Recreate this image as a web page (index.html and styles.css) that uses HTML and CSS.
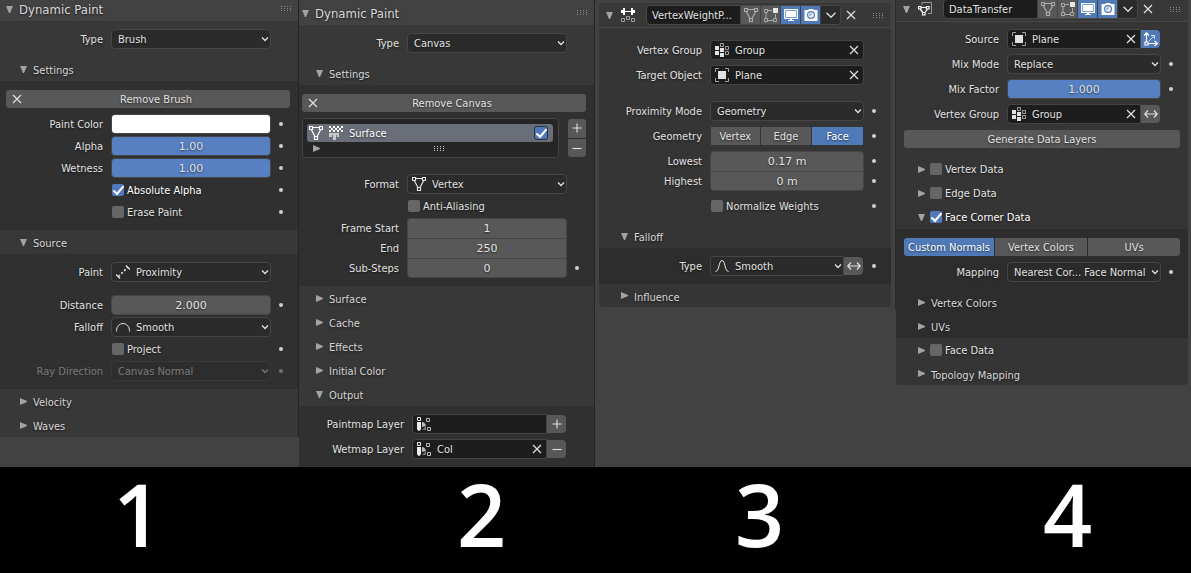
FILE: index.html
```
<!DOCTYPE html>
<html lang="en">
<head>
<meta charset="utf-8">
<title>Modifier panels</title>
<link rel="stylesheet" href="styles.css">
</head>
<body>
<svg class="sprite" aria-hidden="true">
  <symbol id="down" viewBox="0 0 7 7"><path d="M0 0H7L4 7H3Z" fill="currentColor"/></symbol>
  <symbol id="right" viewBox="0 0 7 7"><path d="M0 0V7L7 4V3Z" fill="currentColor"/></symbol>
  <symbol id="chev" viewBox="0 0 8 8"><path d="M1 2.5L4 5.5L7 2.5" fill="none" stroke="currentColor" stroke-width="1.3" vector-effect="non-scaling-stroke"/></symbol>
  <symbol id="x" viewBox="0 0 10 10"><path d="M1 1L9 9M9 1L1 9" fill="none" stroke="currentColor" stroke-width="1.2"/></symbol>
  <symbol id="plus" viewBox="0 0 10 10"><path d="M.5 5H9.5M5 .5V9.5" fill="none" stroke="currentColor" stroke-width="1.1"/></symbol>
  <symbol id="minus" viewBox="0 0 10 10"><path d="M.5 5.5H9.5" fill="none" stroke="currentColor" stroke-width="1.1"/></symbol>
  <symbol id="grip" viewBox="0 0 11 5"><path d="M0 .5H11M0 2.5H11M0 4.5H11" fill="none" stroke="currentColor" stroke-dasharray="1 2"/></symbol>
  <symbol id="arrows" viewBox="0 0 14 14"><path d="M1 7H13M4 3.5L.8 7L4 10.5M10 3.5L13.2 7L10 10.5" fill="none" stroke="currentColor" stroke-width="1.2"/></symbol>
  <symbol id="mesh" viewBox="0 0 14 14"><path d="M.5 .5H3.5V3.5H.5ZM10.5 .5H13.5V3.5H10.5ZM5.5 10.5H8.5V13.5H5.5ZM4 1.5H10M2.5 4L6 10.5M11.5 4L8 10.5" fill="none" stroke="currentColor" stroke-width="1.2"/></symbol>
  <symbol id="edit" viewBox="0 0 14 14"><path d="M.5 1.5H3.5V4.5H.5ZM.5 10.5H3.5V13.5H.5ZM9.5 10.5H12.5V13.5H9.5ZM4 2.5H8M2 5V10M4 12.5H9M11.500 6V10" fill="none" stroke="currentColor"/><rect x="9" width="5" height="5" fill="#e6e6e6"/></symbol>
  <symbol id="screen" viewBox="0 0 14 14"><path d="M.7 1.700H13.300V10.300H.7Z" fill="none" stroke="currentColor" stroke-width="1.3"/><path d="M2 3H12V9H2ZM6 10H8V12H10V13H4V12H6Z" fill="currentColor"/></symbol>
  <symbol id="camera" viewBox="0 0 14 14"><path fill-rule="evenodd" d="M.5 2H4L5 1H9L10 2H13.500V13H.5ZM7 3A4 4 0 1 0 7 11A4 4 0 1 0 7 3Z" fill="currentColor"/><circle cx="7" cy="7" r="2.8" fill="currentColor" opacity=".9"/><path d="M6 8A1.500 1.500 0 0 1 8 6" fill="none" stroke="#537cbf"/></symbol>
  <symbol id="canvas" viewBox="0 0 14 14"><path d="M0 0H2V2H0ZM4 0H6V2H4ZM8 0H10V2H8ZM12 0H14V2H12ZM2 2H4V4H2ZM6 2H8V4H6ZM10 2H12V4H10ZM0 4H2V6H0ZM4 4H6V6H4ZM8 4H10V6H8ZM12 4H14V6H12Z" fill="#fff"/><path d="M0 7H10V11H8V9H7V14H4V9H3V11H0Z" fill="#c9c9c9"/></symbol>
  <symbol id="distance" viewBox="0 0 14 14"><path d="M0 9.500L4 13.500M10 .5L14 4.500" fill="none" stroke="currentColor" stroke-width="1.3"/><path d="M2.500 11.500L12 2" fill="none" stroke="currentColor" stroke-width="1.7" stroke-dasharray="2 2"/></symbol>
  <symbol id="dome" viewBox="0 0 14 14"><path d="M.5 11.500V10.500A6.500 7 0 0 1 13.500 10.500V11.500" fill="none" stroke="currentColor"/></symbol>
  <symbol id="bell" viewBox="0 0 14 14"><path d="M.5 12.500C4.500 12.500 3.500 1.500 7 1.500S9.500 12.500 13.500 12.500" fill="none" stroke="currentColor"/></symbol>
  <symbol id="vgroup" viewBox="0 0 14 14"><path d="M0 3H4V7H0ZM0 8H4V12H0ZM5 5H9V9H5ZM5 10H9V14H5Z" fill="currentColor"/><path d="M5.500 .5H8.500V3.500H5.500ZM10.500 3.500H13.500V6.500H10.500ZM10.500 8.500H13.500V11.500H10.500Z" fill="none" stroke="#a0a0a0"/></symbol>
  <symbol id="object" viewBox="0 0 14 14"><rect x="3" y="3" width="8" height="8" fill="currentColor"/><path d="M.5 4V.5H4M10 .5H13.500V4M13.500 10V13.500H10M4 13.500H.5V10" fill="none" stroke="#a0a0a0"/></symbol>
  <symbol id="vcol" viewBox="0 0 14 14"><path d="M.5 .5H3.500V3.500H.5Z" fill="none" stroke="#eee"/><path d="M0 5H4V12Q2 16 0 12Z" fill="#eee"/><path d="M5 5Q8 5 9 9L5 10Z" fill="#bbb"/><path d="M5 13L9 9V13Z" fill="#777"/><path d="M9.500 1.500H12.500V4.500H9.500ZM10.500 10.500H13.500V13.500H10.500Z" fill="none" stroke="#bbb"/></symbol>
  <symbol id="weight" viewBox="0 0 14 14"><path d="M0 2H2V0H4V3H10V0H12V2H14V5H12V7H10V4H4V7H2V5H0Z" fill="#fff"/><path d="M.5 10.500H3.500V13.500H.5ZM5.500 8.500H8.500V11.500H5.500ZM10.500 10.500H13.500V13.500H10.500Z" fill="none" stroke="#a0a0a0"/></symbol>
  <symbol id="transfer" viewBox="0 0 14 14"><path d="M4 3V.5H13.500V11.500H10" fill="none" stroke="#999"/><path d="M.5 4.500H3V7H.5ZM8.500 4.500H11V7H8.500ZM4.500 10.500H7V13H4.500ZM3 5.500H8.500M2 7L5 10.500M9.500 7L7 10.500" fill="none" stroke="#fff" stroke-width="1.200"/></symbol>
  <symbol id="axis" viewBox="0 0 14 14"><path d="M2.500 9.500V1M0 3.500L2.500 .8L5 3.500M4.500 11.500H13M10.500 9L13.300 11.500L10.500 14M1 10H4V13H1Z" fill="none" stroke="#fff" stroke-width="1.200"/><path d="M5 9L10.500 3.500M7 3.500H10.500V7" fill="none" stroke="#cfdcf2"/></symbol>
</svg>

<main class="board">
  <section class="column brush" aria-label="Dynamic Paint brush">
    <header class="title"><button class="fold"><svg class="tri"><use href="#down"/></svg>Dynamic Paint</button><svg class="grip"><use href="#grip"/></svg></header>
    <div class="body">
      <div class="row"><label for="t1">Type</label><span class="drop"><select id="t1"><option>Brush</option></select><svg class="chev"><use href="#chev"/></svg></span></div>
    </div>
    <button class="fold sub"><svg class="tri"><use href="#down"/></svg>Settings</button>
    <div class="body inner">
      <button class="wide"><svg class="cross"><use href="#x"/></svg><span>Remove Brush</span></button>
      <div class="rows tight">
        <div class="row"><label for="pc">Paint Color</label><input id="pc" class="swatch" type="color" value="#ffffff"><i class="dot"></i></div>
        <div class="row"><label for="al">Alpha</label><input id="al" class="num slide" value="1.00"><i class="dot"></i></div>
        <div class="row"><label for="we">Wetness</label><input id="we" class="num slide" value="1.00"><i class="dot"></i></div>
        <div class="row"><label class="check on"><input type="checkbox" checked><span>Absolute Alpha</span></label><i class="dot"></i></div>
        <div class="row"><label class="check"><input type="checkbox"><span>Erase Paint</span></label><i class="dot"></i></div>
      </div>
    </div>
    <button class="fold sub"><svg class="tri"><use href="#down"/></svg>Source</button>
    <div class="body inner">
      <div class="row"><label for="pa">Paint</label><span class="drop pic"><select id="pa"><option>Proximity</option></select><svg class="icon"><use href="#distance"/></svg><svg class="chev"><use href="#chev"/></svg></span></div>
      <div class="rows tight spaced">
        <div class="row"><label for="di">Distance</label><input id="di" class="num" value="2.000"><i class="dot"></i></div>
        <div class="row"><label for="fa">Falloff</label><span class="drop pic"><select id="fa"><option>Smooth</option></select><svg class="icon"><use href="#dome"/></svg><svg class="chev"><use href="#chev"/></svg></span></div>
        <div class="row"><label class="check"><input type="checkbox"><span>Project</span></label><i class="dot"></i></div>
        <div class="row off"><label for="ra">Ray Direction</label><span class="drop"><select id="ra" disabled><option>Canvas Normal</option></select><svg class="chev"><use href="#chev"/></svg></span><i class="dot"></i></div>
      </div>
    </div>
    <button class="fold sub"><svg class="tri"><use href="#right"/></svg>Velocity</button>
    <button class="fold sub"><svg class="tri"><use href="#right"/></svg>Waves</button>
  </section>

  <section class="column surface" aria-label="Dynamic Paint canvas">
    <header class="title low"><button class="fold"><svg class="tri"><use href="#down"/></svg>Dynamic Paint</button><svg class="grip"><use href="#grip"/></svg></header>
    <div class="body">
      <div class="row"><label for="t2">Type</label><span class="drop"><select id="t2"><option>Canvas</option></select><svg class="chev"><use href="#chev"/></svg></span></div>
    </div>
    <button class="fold sub"><svg class="tri"><use href="#down"/></svg>Settings</button>
    <div class="body inner">
      <button class="wide"><svg class="cross"><use href="#x"/></svg><span>Remove Canvas</span></button>
      <div class="listing">
        <div class="list">
          <div class="item"><svg class="icon"><use href="#mesh"/></svg><svg class="icon"><use href="#canvas"/></svg><span>Surface</span><input type="checkbox" checked aria-label="Surface enabled"></div>
          <div class="listfoot"><svg class="tri"><use href="#right"/></svg><svg class="grip"><use href="#grip"/></svg></div>
        </div>
        <div class="pair"><button aria-label="Add"><svg><use href="#plus"/></svg></button><button aria-label="Remove"><svg><use href="#minus"/></svg></button></div>
      </div>
      <div class="rows tight">
        <div class="row"><label for="fo">Format</label><span class="drop pic"><select id="fo"><option>Vertex</option></select><svg class="icon"><use href="#mesh"/></svg><svg class="chev"><use href="#chev"/></svg></span></div>
        <div class="row"><label class="check"><input type="checkbox"><span>Anti-Aliasing</span></label></div>
        <div class="stack">
          <div class="row"><label for="fs">Frame Start</label><input id="fs" class="num" value="1"></div>
          <div class="row"><label for="en">End</label><input id="en" class="num" value="250"></div>
          <div class="row"><label for="ss">Sub-Steps</label><input id="ss" class="num" value="0"><i class="dot"></i></div>
        </div>
      </div>
    </div>
    <button class="fold sub"><svg class="tri"><use href="#right"/></svg>Surface</button>
    <button class="fold sub"><svg class="tri"><use href="#right"/></svg>Cache</button>
    <button class="fold sub"><svg class="tri"><use href="#right"/></svg>Effects</button>
    <button class="fold sub"><svg class="tri"><use href="#right"/></svg>Initial Color</button>
    <button class="fold sub"><svg class="tri"><use href="#down"/></svg>Output</button>
    <div class="body inner rows layers">
      <div class="row"><label for="pl">Paintmap Layer</label><span class="joined"><span class="search"><svg class="icon"><use href="#vcol"/></svg><input id="pl" value=""></span><button class="side" aria-label="Add layer"><svg><use href="#plus"/></svg></button></span></div>
      <div class="row"><label for="wl">Wetmap Layer</label><span class="joined"><span class="search"><svg class="icon"><use href="#vcol"/></svg><input id="wl" value="Col"><button aria-label="Clear"><svg><use href="#x"/></svg></button></span><button class="side" aria-label="Remove layer"><svg><use href="#minus"/></svg></button></span></div>
    </div>
  </section>

  <section class="column framed" aria-label="Vertex Weight Proximity">
    <div class="card">
      <header class="modhead">
        <svg class="tri"><use href="#down"/></svg><svg class="icon"><use href="#weight"/></svg>
        <div class="bar"><input value="VertexWeightP..." aria-label="Modifier name"><button aria-label="On cage"><svg><use href="#mesh"/></svg></button><button aria-label="Edit mode"><svg><use href="#edit"/></svg></button><button class="lit" aria-label="Viewport"><svg><use href="#screen"/></svg></button><button class="lit" aria-label="Render"><svg><use href="#camera"/></svg></button><button class="more" aria-label="More"><svg><use href="#chev"/></svg></button></div>
        <button class="close" aria-label="Close"><svg><use href="#x"/></svg></button><svg class="grip"><use href="#grip"/></svg>
      </header>
      <div class="body top">
        <div class="rows">
          <div class="row"><label for="vg">Vertex Group</label><span class="search"><svg class="icon"><use href="#vgroup"/></svg><input id="vg" value="Group"><button aria-label="Clear"><svg><use href="#x"/></svg></button></span></div>
          <div class="row"><label for="to">Target Object</label><span class="search"><svg class="icon"><use href="#object"/></svg><input id="to" value="Plane"><button aria-label="Clear"><svg><use href="#x"/></svg></button></span></div>
        </div>
        <div class="rows apart">
          <div class="row"><label for="pm">Proximity Mode</label><span class="drop"><select id="pm"><option>Geometry</option></select><svg class="chev"><use href="#chev"/></svg></span><i class="dot"></i></div>
          <div class="row"><span class="name">Geometry</span><span class="tabs"><button>Vertex</button><button>Edge</button><button class="lit">Face</button></span><i class="dot"></i></div>
          <div class="stack">
            <div class="row"><label for="lo">Lowest</label><input id="lo" class="num" value="0.17 m"><i class="dot"></i></div>
            <div class="row"><label for="hi">Highest</label><input id="hi" class="num" value="0 m"><i class="dot"></i></div>
          </div>
          <div class="row"><label class="check"><input type="checkbox"><span>Normalize Weights</span></label><i class="dot"></i></div>
        </div>
      </div>
      <button class="fold sub"><svg class="tri"><use href="#down"/></svg>Falloff</button>
      <div class="body inner">
        <div class="row"><label for="ft">Type</label><span class="joined"><span class="drop pic"><select id="ft"><option>Smooth</option></select><svg class="icon"><use href="#bell"/></svg><svg class="chev"><use href="#chev"/></svg></span><button class="side" aria-label="Invert"><svg class="big"><use href="#arrows"/></svg></button></span><i class="dot"></i></div>
      </div>
      <button class="fold sub"><svg class="tri"><use href="#right"/></svg>Influence</button>
    </div>
  </section>

  <section class="column transfer" aria-label="Data Transfer">
    <div class="card">
      <header class="modhead">
        <svg class="tri"><use href="#down"/></svg><svg class="icon"><use href="#transfer"/></svg>
        <div class="bar"><input value="DataTransfer" aria-label="Modifier name"><button aria-label="On cage"><svg><use href="#mesh"/></svg></button><button aria-label="Edit mode"><svg><use href="#edit"/></svg></button><button class="lit" aria-label="Viewport"><svg><use href="#screen"/></svg></button><button class="lit" aria-label="Render"><svg><use href="#camera"/></svg></button><button class="more" aria-label="More"><svg><use href="#chev"/></svg></button></div>
        <button class="close" aria-label="Close"><svg><use href="#x"/></svg></button><svg class="grip"><use href="#grip"/></svg>
      </header>
      <div class="body rows">
        <div class="row"><label for="so">Source</label><span class="joined"><span class="search"><svg class="icon"><use href="#object"/></svg><input id="so" value="Plane"><button aria-label="Clear"><svg><use href="#x"/></svg></button></span><button class="side lit" aria-label="Object transform"><svg class="big"><use href="#axis"/></svg></button></span></div>
        <div class="row"><label for="mm">Mix Mode</label><span class="drop"><select id="mm"><option>Replace</option></select><svg class="chev"><use href="#chev"/></svg></span><i class="dot"></i></div>
        <div class="row"><label for="mf">Mix Factor</label><input id="mf" class="num slide" value="1.000"><i class="dot"></i></div>
        <div class="row"><label for="vh">Vertex Group</label><span class="joined"><span class="search"><svg class="icon"><use href="#vgroup"/></svg><input id="vh" value="Group"><button aria-label="Clear"><svg><use href="#x"/></svg></button></span><button class="side" aria-label="Invert"><svg class="big"><use href="#arrows"/></svg></button></span></div>
        <button class="wide"><span>Generate Data Layers</span></button>
      </div>
      <div class="sub checked"><svg class="tri"><use href="#right"/></svg><label class="check"><input type="checkbox"><span>Vertex Data</span></label></div>
      <div class="sub checked"><svg class="tri"><use href="#right"/></svg><label class="check"><input type="checkbox"><span>Edge Data</span></label></div>
      <div class="sub checked"><svg class="tri"><use href="#down"/></svg><label class="check on"><input type="checkbox" checked><span>Face Corner Data</span></label></div>
      <div class="inner">
        <div class="body rows">
          <div class="tabs full"><button class="lit">Custom Normals</button><button>Vertex Colors</button><button>UVs</button></div>
          <div class="row"><label for="ma">Mapping</label><span class="drop"><select id="ma"><option>Nearest Cor... Face Normal</option></select><svg class="chev"><use href="#chev"/></svg></span><i class="dot"></i></div>
        </div>
        <button class="fold sub"><svg class="tri"><use href="#right"/></svg>Vertex Colors</button>
        <button class="fold sub"><svg class="tri"><use href="#right"/></svg>UVs</button>
      </div>
      <div class="sub checked"><svg class="tri"><use href="#right"/></svg><label class="check"><input type="checkbox"><span>Face Data</span></label></div>
      <button class="fold sub"><svg class="tri"><use href="#right"/></svg>Topology Mapping</button>
    </div>
  </section>
</main>
<footer class="numbers"><span>1</span><span>2</span><span>3</span><span>4</span></footer>
</body>
</html>
```
FILE: styles.css
```
* { box-sizing: border-box; }

body {
  margin: 0;
  min-height: 100vh;
  display: flex;
  flex-direction: column;
  background: #000;
  color: #e2e2e2;
  font: 11px/14px "DejaVu Sans Condensed", "DejaVu Sans", sans-serif;
  font-stretch: condensed;
  text-shadow: 0 1px 2px rgba(0, 0, 0, .6);
}

button, input, select {
  margin: 0;
  padding: 0;
  border: 0;
  background: none;
  color: inherit;
  font: inherit;
  text-shadow: inherit;
  min-width: 0;
}

svg { display: block; flex: none; width: 10px; height: 10px; }
.sprite { position: absolute; width: 0; height: 0; }
svg.icon, svg.big { width: 14px; height: 14px; }
svg.tri { width: 7px; height: 7px; color: #a3a3a3; }
svg.grip { width: 11px; height: 5px; color: #8c8c8c; }
svg.chev { width: 8px; height: 8px; }

.board {
  display: grid;
  grid-template-columns: minmax(0, 299fr) minmax(0, 296fr) minmax(0, 301fr) minmax(0, 295fr);
  background: #424242;
}

/* panels */
.brush, .surface { --cols: minmax(0, 111fr) minmax(0, 160fr) 27px; align-self: start; background: #383838; border-right: 1px solid #242424; }
.surface { --cols: minmax(0, 108fr) minmax(0, 160fr) 27px; --shift: -3px; }
.framed, .transfer { --cols: minmax(0, 111fr) minmax(0, 154fr) 27px; }
.framed { align-self: start; padding: 3px 4px; border-right: 1px solid #2a2a2a; }
.transfer { padding-right: 3px; }
.card { background: #353535; border-radius: 4px; overflow: hidden; }
.transfer .card { border-radius: 0 0 4px 4px; }

.title {
  display: flex;
  align-items: center;
  justify-content: space-between;
  height: 21px;
  padding: 0 6px 2px 0;
  background: #424242;
}
.title.low { height: 25px; padding-top: 4px; }
.title .grip { margin-bottom: 2px; }
.fold { display: flex; align-items: center; width: 100%; text-align: left; color: #d8d8d8; }
.title .fold { width: auto; gap: 6px; padding-left: calc(6px + var(--shift, 0px)); font-size: 13px; }
.sub { height: 24px; padding-left: calc(20px + var(--shift, 0px)); padding-top: 4px; }
.fold.sub { gap: 6px; }
.sub .tri { margin-bottom: 4px; }
.card .sub { padding-left: 22px; }
.card > .sub:last-child { height: 23px; }
.sub.checked { display: flex; align-items: center; padding-top: 0; gap: 4px; }
.checked .tri { margin-bottom: 0; }

.body { padding: 8px 0; }
.body.top { padding-top: 12px; }
.inner { background: #303030; }
.card .inner { background: #2d2d2d; }
.transfer .body { padding-top: 7px; }
.transfer .inner .body { padding-top: 8px; }

/* rows */
.rows { display: flex; flex-direction: column; gap: 5px; }
.rows.tight { gap: 2px; }
.wide + .rows { margin-top: 6px; }
.rows.spaced { margin-top: 13px; }
.rows.apart, .listing + .rows { margin-top: 16px; }
.row { display: grid; grid-template-columns: var(--cols); align-items: center; height: 20px; }
.row > label, .name { padding: 2px 8px 0 0; text-align: right; white-space: nowrap; }
.row > .check { grid-column: 2; padding: 0; }
.dot { grid-column: 3; width: 4px; height: 4px; margin-left: 8px; border-radius: 50%; background: #d0d0d0; }
.off { opacity: .4; }
.layers { --cols: minmax(0, 113fr) minmax(0, 155fr) 27px; }

/* fields */
.drop { display: grid; align-items: center; min-width: 0; }
.drop > * { grid-area: 1 / 1; pointer-events: none; }
.drop select {
  appearance: none;
  pointer-events: auto;
  width: 100%;
  height: 20px;
  padding: 2px 6px 0;
  border: 1px solid #464646;
  border-radius: 4px;
  background: #2b2b2b;
  opacity: 1;
}
.drop.pic select { padding-left: 24px; }
.drop .icon { margin-left: 5px; }
.drop .chev { justify-self: end; margin-right: 2px; }

.num, .swatch {
  width: 100%;
  height: 20px;
  border: 1px solid #464646;
  border-radius: 4px;
  background: #585858;
  text-align: center;
  font-family: "DejaVu Sans", sans-serif;
  font-stretch: normal;
}
.num.slide { background: #5680c2; }
.swatch { background: #fff; }
.swatch::-webkit-color-swatch-wrapper { padding: 0; }
.swatch::-webkit-color-swatch { border: 0; }
.stack .num { border-radius: 0; border-bottom-width: 0; }
.stack .row:first-child .num { border-radius: 4px 4px 0 0; }
.stack .row:last-child .num { border-radius: 0 0 4px 4px; border-bottom-width: 1px; }

.check { display: flex; align-items: center; gap: 3px; white-space: nowrap; }
.check span { padding-top: 2px; }
.on { color: #fff; }
input[type="checkbox"] {
  appearance: none;
  flex: none;
  width: 12px;
  height: 12px;
  margin-left: 1px;
  border-radius: 2px;
  background: #666;
}
input[type="checkbox"]:checked { display: grid; place-items: center; background: #5079bd; }
input[type="checkbox"]:checked::after {
  content: "";
  width: 9px;
  height: 4px;
  margin-bottom: 3px;
  border: solid #fff;
  border-width: 0 0 2px 2px;
  rotate: -50deg;
}

.search {
  display: flex;
  align-items: center;
  height: 20px;
  padding: 0 4px;
  border: 1px solid #444;
  border-radius: 4px;
  background: #1d1d1d;
}
.search input { flex: 1; padding: 2px 0 0 6px; }

.joined { display: grid; grid-template-columns: minmax(0, 1fr) 20px; }
.joined .search, .joined select { border-radius: 4px 0 0 4px; }
.side { display: grid; place-items: center; height: 18px; margin: 1px 1px 1px 0; border-radius: 0 4px 4px 0; background: #585858; }

.wide { display: flex; align-items: center; width: auto; height: 18px; margin: 1px 8px; padding: 0 6px; border-radius: 3px; background: #585858; }
.brush .wide { width: calc(100% - 14px); margin: 1px 6px; }
.surface .wide { width: calc(100% - 11px); margin: 1px 3px; }
.wide span { flex: 1; padding-top: 2px; text-align: center; }
.wide .cross + span { padding-left: 6px; }

.tabs { display: grid; grid-template-columns: minmax(0, 49fr) minmax(0, 51fr) minmax(0, 51fr); gap: 1px; padding: 0 1px; }
.tabs button { height: 18px; padding-top: 2px; background: #585858; white-space: nowrap; }
.tabs.full { grid-template-columns: minmax(0, 90fr) minmax(0, 92fr) minmax(0, 92fr); margin: 0 8px; padding: 1px 0; }
.full button:first-child { border-radius: 3px 0 0 3px; }
.full button:last-child { border-radius: 0 3px 3px 0; }
.tabs .lit, .side.lit, .bar .lit { background: #5079b8; color: #fff; }

/* surface list */
.listing { display: grid; grid-template-columns: minmax(0, 1fr) 18px; gap: 9px; padding: 5px 8px 0 3px; }
.list { height: 40px; padding: 5px 5px 0 4px; border: 1px solid #444; border-radius: 4px; background: #262626; }
.item { display: flex; align-items: center; gap: 6px; height: 18px; padding: 0 6px 0 2px; border-radius: 3px; background: #696e79; color: #fff; }
.item span { flex: 1; padding-top: 2px; }
.item input { outline: 1px solid #26303f; }
.listfoot { display: grid; grid-template-columns: 1fr auto 1fr; align-items: center; height: 12px; padding: 0 6px; }
.list .grip { color: #ccc; margin-left: 18px; }
.pair { display: grid; gap: 1px; padding: 1px 0; }
.pair button { display: grid; place-items: center; background: #585858; border-radius: 3px 3px 0 0; }
.pair button:last-child { border-radius: 0 0 3px 3px; }

/* modifier header */
.modhead { display: flex; align-items: center; height: 25px; padding: 0 7px; border-bottom: 1px solid #474747; background: #383838; }
.transfer .modhead { height: 22px; padding-bottom: 3px; }
.modhead > .icon { margin-left: 8px; }
.bar { display: flex; flex: 1; min-width: 0; height: 20px; margin-left: 11px; border: 1px solid #484848; border-radius: 4px; background: #1d1d1d; overflow: hidden; }
.bar input { flex: 1; padding: 2px 0 0 5px; }
.bar button { display: grid; place-items: center; flex: none; width: 20px; border-left: 1px solid #424242; background: #585858; color: #aaa; }
.bar svg { width: 14px; height: 14px; }
.bar .more { background: #2b2b2b; color: #ddd; }
.bar .more svg { width: 12px; height: 12px; }
.close { margin: 0 17px 0 5px; }

/* captions */
.numbers {
  flex: 1;
  display: grid;
  grid-template-columns: 344fr 278fr 308fr 148fr;
  padding-left: 113px;
  color: #fff;
  font: 600 86px/94px "Open Sans", "Noto Sans", sans-serif;
}
```
